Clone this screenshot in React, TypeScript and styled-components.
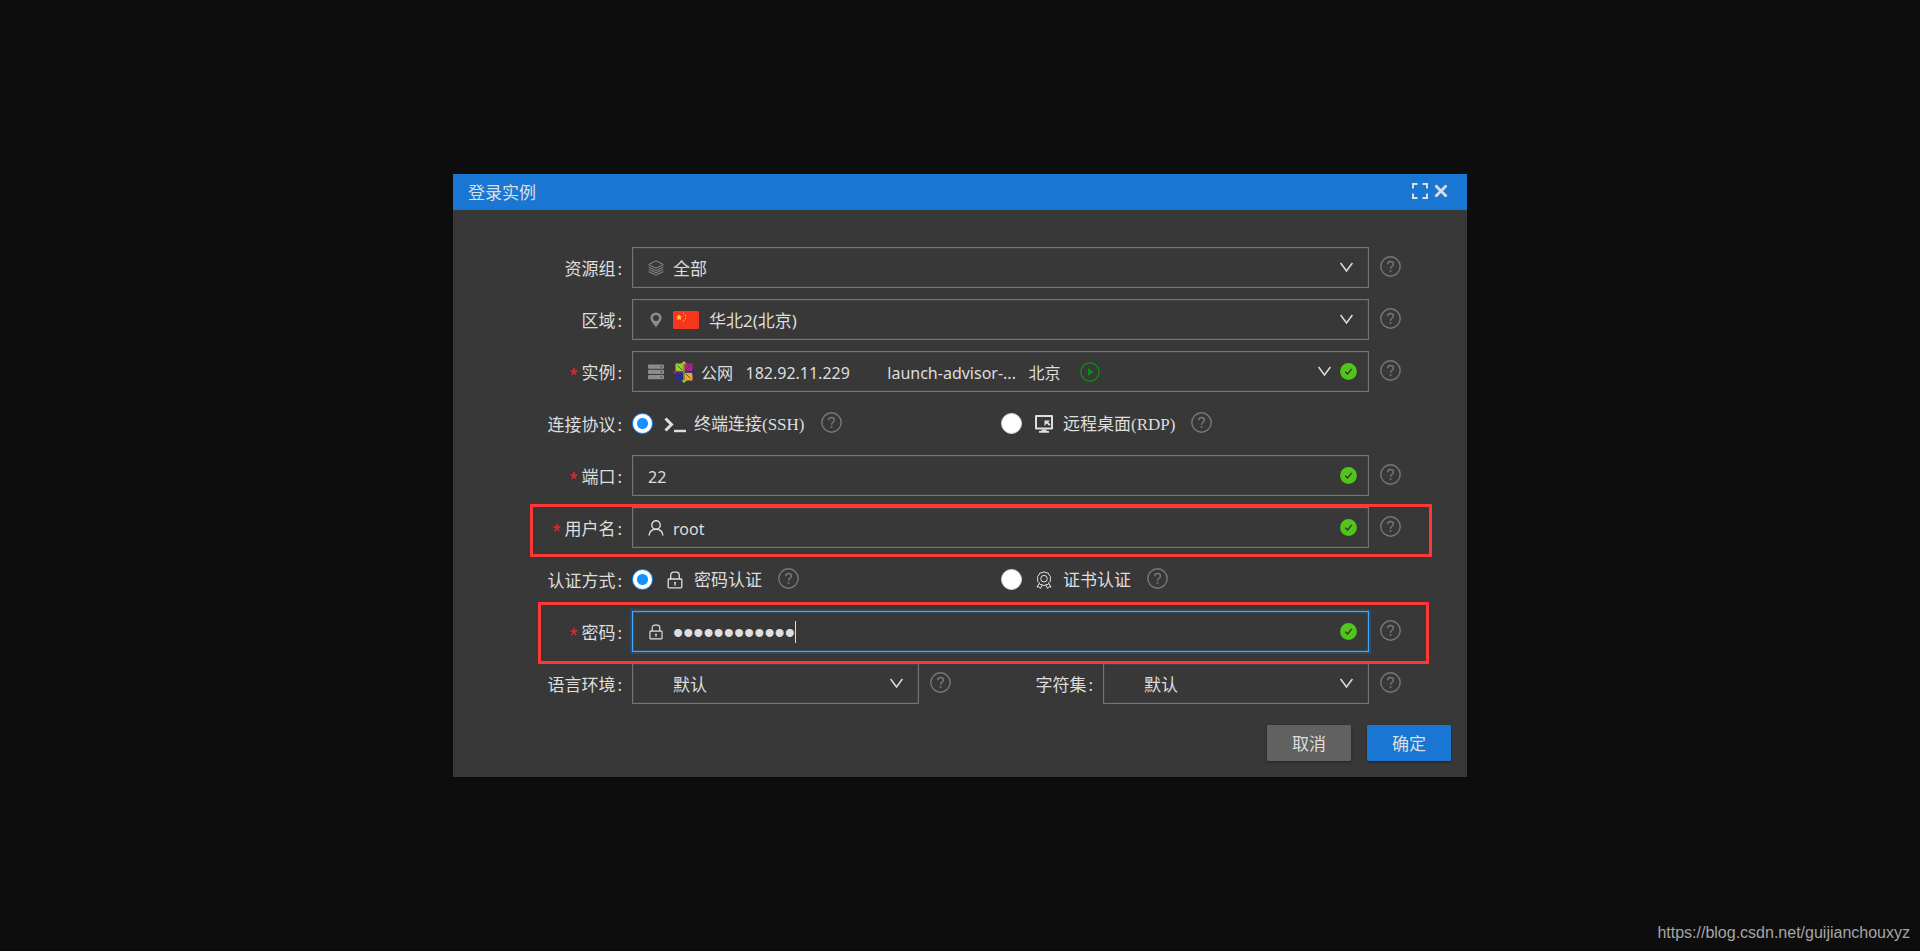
import React from 'react';
import styled, { createGlobalStyle, css } from 'styled-components';

const cjk = '"Noto Sans CJK SC"';
const ui = `"Noto Sans", ${cjk}, sans-serif`;
const mixed = `"Liberation Serif", ${cjk}, serif`;

const GlobalStyle = createGlobalStyle`
  *, *::before, *::after { box-sizing: border-box; }
  body {
    margin: 0;
    background: #0d0d0d;
    color: #dedede;
    font: 17px/24px ${ui};
  }
`;

const Page = styled.main`
  position: relative;
  min-height: 100vh;
  display: flex;
  align-items: center;
  justify-content: center;
`;

const Dialog = styled.section`
  width: 1014px;
  max-width: 100%;
  background: #383838;
`;

const TitleBar = styled.header`
  display: flex;
  align-items: center;
  height: 36px;
  padding: 0 19px 0 15px;
  background: #1976d2;
`;

const Title = styled.h1`
  flex: 1;
  margin: 0;
  padding-top: 2px;
  font-size: 17px;
  font-weight: 400;
`;

const IconButton = styled.button`
  display: flex;
  margin: 0 0 2px 6px;
  padding: 0;
  border: 0;
  background: none;
  color: #dedede;
`;

const Form = styled.form`
  display: flex;
  flex-direction: column;
  gap: 11px;
  padding-top: 37px;
`;

const Row = styled.div`
  position: relative;
  display: flex;
  align-items: center;
  height: 41px;
  padding-right: 66px;
`;

const LabelBox = styled.label<{ $grow?: boolean }>`
  display: flex;
  justify-content: flex-end;
  flex: ${(p) => (p.$grow ? '1' : '0 0 179px')};
  padding: 2px 10px 0 0;
  white-space: nowrap;
`;

const Star = styled.span`
  height: 24px;
  padding-right: 2px;
  color: #f5222d;
  font: 20px/34px "Liberation Mono", monospace;
`;

const Colon = styled.span`
  padding-left: 2px;
`;

const Field = styled.div<{ $focused?: boolean; $basis?: number; $status?: boolean }>`
  display: flex;
  align-items: center;
  flex: ${(p) => (p.$basis ? `0 1 ${p.$basis}px` : '1')};
  min-width: 0;
  height: 41px;
  padding: 0 ${(p) => (p.$status ? 11 : 15)}px 0 15px;
  border: 1px solid #757575;
  box-shadow: inset 0 0 0 1px #424242;
  ${(p) =>
    p.$focused &&
    css`
      border-color: #40a9ff;
      box-shadow: 0 0 0 2px rgba(24, 144, 255, 0.2), inset 0 0 0 1px #2f4f6b;
    `}
`;

const Slot = styled.span`
  display: flex;
  justify-content: center;
  flex: 0 0 16px;
  margin-right: 9px;
  color: #8c8c8c;
`;

const Emblem = styled.span<{ $gap: number }>`
  display: flex;
  margin-right: ${(p) => p.$gap}px;
`;

const control = css`
  min-width: 0;
  height: 39px;
  margin: 0;
  padding: 2px 0 0;
  border: 0;
  outline: 0;
  background: transparent;
  color: #dedede;
  caret-color: transparent;
`;

const Select = styled.select<{ $fit?: boolean }>`
  ${control}
  appearance: none;
  font: ${(p) => (p.$fit ? 16 : 17)}px/24px ${ui};
  ${(p) => (p.$fit ? 'field-sizing: content;' : 'flex: 1;')}
`;

const Input = styled.input`
  ${control}
  flex: 1;
  font: 16px/24px ${ui};
`;

const PasswordInput = styled.input`
  ${control}
  padding-top: 4px;
  field-sizing: content;
  font: 29px/24px "Liberation Sans", sans-serif;
`;

const Caret = styled.span`
  width: 1px;
  height: 22px;
  background: #dedede;
`;

const Spacer = styled.span`
  flex: 1;
`;

const Status = styled.span`
  display: flex;
  margin-left: 9px;
`;

const Running = styled.span`
  display: flex;
  margin-left: 20px;
`;

const HelpButton = styled.button<{ $gap?: number }>`
  display: flex;
  flex: none;
  margin: 0 0 2px ${(p) => p.$gap ?? 11}px;
  padding: 0;
  border: 0;
  background: none;
  color: #787878;
`;

const Choices = styled.div`
  display: grid;
  grid-template-columns: 369px 1fr;
  flex: 1;
`;

const Choice = styled.div`
  display: flex;
  align-items: center;
`;

const ChoiceLabel = styled.label`
  display: flex;
  align-items: center;
`;

const ChoiceText = styled.span`
  padding-top: 2px;
  font-family: ${mixed};
`;

const ChoiceIcon = styled.span`
  display: flex;
  justify-content: center;
  width: 26px;
  margin: 0 6px 0 9px;
`;

const Radio = styled.input`
  appearance: none;
  width: 21px;
  height: 21px;
  margin: 0;
  border: 1px solid #d9d9d9;
  border-radius: 50%;
  background: #fff;
  &:checked {
    border-color: #1890ff;
    background: radial-gradient(circle, #1890ff 5px, #fff 6px);
  }
`;

const Highlight = styled.div<{ $inset: string }>`
  position: absolute;
  z-index: 1;
  inset: ${(p) => p.$inset};
  border: 3px solid #ff3835;
  pointer-events: none;
`;

const Footer = styled.footer`
  display: flex;
  justify-content: flex-end;
  gap: 16px;
  padding: 10px 16px 16px;
`;

const ActionButton = styled.button<{ $primary?: boolean }>`
  width: 84px;
  height: 36px;
  padding: 2px 0 0;
  border: 0;
  border-radius: 1px;
  background: ${(p) => (p.$primary ? '#1976d2' : '#616161')};
  box-shadow: 0 1px 3px rgba(0, 0, 0, 0.4);
  color: #dedede;
  font: 17px/24px ${ui};
`;

const Watermark = styled.a`
  position: absolute;
  right: 10px;
  bottom: 6px;
  color: #a6a6a6;
  font: 16px/24px "Liberation Sans", sans-serif;
  text-decoration: none;
`;

const stroke = { fill: 'none', stroke: 'currentColor' } as const;

const Chevron = () => (
  <svg width="13" height="11" viewBox="0 0 13 11" {...stroke} strokeWidth="1.5" color="#dedede" aria-hidden="true">
    <path d="M.6 1 6.500 9 12.400 1" />
  </svg>
);

const HelpIcon = () => (
  <svg width="21" height="21" viewBox="0 0 21 21" {...stroke} strokeWidth="1.4" aria-hidden="true">
    <circle cx="10.500" cy="10.500" r="9.700" />
    <path d="M7.600 8.300c0-1.700 1.200-2.800 2.900-2.800s2.900 1 2.900 2.600c0 2.200-2.900 2.100-2.900 4.600" />
    <path d="M10.500 14.200v1.700" strokeWidth="1.700" />
  </svg>
);

const CheckIcon = () => (
  <svg width="17" height="17" viewBox="0 0 17 17" aria-hidden="true">
    <circle cx="8.500" cy="8.500" r="8.400" fill="#52c41a" />
    <path d="M5.300 8.700 7.600 11l4.100-5.200" fill="none" stroke="#333" strokeWidth="1.300" />
  </svg>
);

const LayersIcon = () => (
  <svg width="16" height="16" viewBox="0 0 16 16" {...stroke} strokeWidth="1" aria-hidden="true">
    <path d="M8 .8 15.300 4.500 8 8.200.7 4.500z" />
    <path d="M.7 7 8 10.600 15.300 7M.7 9.300 8 12.900l7.300-3.600M.7 11.600 8 15.200l7.300-3.600" />
  </svg>
);

const PinIcon = () => (
  <svg width="12" height="16" viewBox="0 0 12 16" aria-hidden="true">
    <path
      fill="currentColor"
      fillRule="evenodd"
      d="M6 .5A5.500 5.500 0 0 0 .5 6c0 3.500 3.800 6.300 5.500 9.500C7.700 12.300 11.500 9.500 11.500 6A5.500 5.500 0 0 0 6 .5zM6 3a3 3 0 1 1 0 6 3 3 0 0 1 0-6z"
    />
  </svg>
);

const ServerIcon = () => (
  <svg width="16" height="16" viewBox="0 0 16 16" aria-hidden="true">
    {[0.5, 5.75, 11].map((y) => (
      <g key={y}>
        <rect x="0" y={y} width="16" height="4.300" rx="1" fill="currentColor" />
        <circle cx="13.300" cy={y + 2.1} r=".8" fill="#383838" />
      </g>
    ))}
  </svg>
);

const FlagIcon = () => (
  <svg width="26" height="18" viewBox="0 0 26 18" aria-hidden="true">
    <rect width="26" height="18" rx="1.500" fill="#f5361d" />
    <path fill="#ffc93c" d="m6 3 .9 2.200 2.400.2-1.800 1.500.5 2.300L6 8 4 9.200l.5-2.300-1.800-1.500 2.400-.2z" />
    <g fill="#f9a02e">
      <circle cx="10.500" cy="2.500" r=".8" />
      <circle cx="12.500" cy="4.600" r=".8" />
      <circle cx="12.500" cy="7.600" r=".8" />
      <circle cx="10.500" cy="9.800" r=".8" />
    </g>
  </svg>
);

const CentosIcon = () => (
  <svg width="22" height="22" viewBox="0 0 22 22" aria-hidden="true">
    <path fill="#efa724" d="m11 0 3 3H8zM11.700 11.700h7.800v7.800h-7.800z" />
    <path fill="#9ccd2a" d="m11 22-3-3h6zM2.500 2.500h7.800v7.800H2.500z" />
    <path fill="#a3268a" d="m0 11 3-3v6zM11.700 2.500h7.800v7.800h-7.800z" />
    <path fill="#2d2c8c" d="m22 11-3-3v6zM2.500 11.700h7.800v7.800H2.500z" />
    <path fill="none" stroke="#383838" strokeWidth=".7" d="m4.500 4.500 4.800 4.800M17.500 4.500l-4.800 4.800M4.500 17.500l4.800-4.800M17.500 17.500l-4.800-4.800" />
    <path strokeWidth="1" stroke="#a3268a" d="M3 11h8" />
    <path strokeWidth="1" stroke="#2d2c8c" d="M11 11h8" />
    <path strokeWidth="1" stroke="#efa724" d="M11 3v8" />
    <path strokeWidth="1" stroke="#9ccd2a" d="M11 11v8" />
  </svg>
);

const PlayIcon = () => (
  <svg width="20" height="20" viewBox="0 0 20 20" aria-hidden="true">
    <circle cx="10" cy="10" r="9.200" fill="none" stroke="#0a9010" strokeWidth="1.300" />
    <path d="M8 6v8l5.500-4z" fill="#0a9010" />
  </svg>
);

const TerminalIcon = () => (
  <svg width="22" height="18" viewBox="0 0 22 18" {...stroke} aria-hidden="true">
    <path d="m1.500 3.500 6 6-6 6" strokeWidth="3" />
    <path d="M10 16h12" strokeWidth="2.400" />
  </svg>
);

const DesktopIcon = () => (
  <svg width="18" height="18" viewBox="0 0 18 18" {...stroke} aria-hidden="true">
    <path d="M1 1h16v12.500H1z" strokeWidth="2" strokeLinejoin="round" />
    <path d="M6.500 14.500h5V16H14v1.700H4V16h2.500z" fill="currentColor" stroke="none" />
    <path d="M9.500 5.500H15L13.300 7.200l2.200 2.200-1.400 1.400-2.200-2.200L9.500 11z" fill="currentColor" stroke="none" />
  </svg>
);

const UserIcon = () => (
  <svg width="16" height="16" viewBox="0 0 16 16" {...stroke} strokeWidth="1.400" color="#dedede" aria-hidden="true">
    <circle cx="8" cy="5" r="4.200" />
    <path d="M1 15.500c.4-3.300 2.800-6.200 7-6.200s6.600 2.900 7 6.200" />
  </svg>
);

const LockIcon = ({ size = 18 }: { size?: number }) => (
  <svg width="16" height={size} viewBox="0 0 16 18" {...stroke} strokeWidth="1.300" color="#dedede" aria-hidden="true">
    <rect x="1.200" y="8" width="13.600" height="8.800" rx=".8" />
    <path d="M3.700 8V4.500C3.700 2.300 5 1.200 6.500 1.200h3c1.500 0 2.800 1.100 2.800 3.300V8" />
    <path d="M8 11v3.400M7 11.600h2" />
  </svg>
);

const BadgeIcon = () => (
  <svg width="16" height="18" viewBox="0 0 16 18" {...stroke} strokeWidth="1" aria-hidden="true">
    <path d="m8 .8 2 .9 2.200.3.900 2 1.500 1.600-.4 2.100.4 2.200-1.500 1.500-.9 2-2.200.3-2 1-2-1-2.200-.3-.9-2-1.500-1.500.4-2.200-.4-2.100L2.900 4l.9-2L6 1.700z" />
    <circle cx="8" cy="7.700" r="3.300" />
    <path d="M3 12.500 1 16l2.200-.2 1.200 1.700L6.300 14M13 12.500l2 3.500-2.200-.2-1.200 1.700L9.700 14" />
  </svg>
);

const ExpandIcon = () => (
  <svg width="16" height="16" viewBox="0 0 16 16" {...stroke} strokeWidth="2" aria-hidden="true">
    <path d="M1 5.500V1h4.500M10.500 1H15v4.500M15 10.500V15h-4.500M5.500 15H1v-4.500" />
  </svg>
);

const CloseIcon = () => (
  <svg width="14" height="16" viewBox="0 0 14 16" {...stroke} strokeWidth="2.800" aria-hidden="true">
    <path d="m1.500 2.500 11 11M12.500 2.500l-11 11" />
  </svg>
);

const Help = ({ gap }: { gap?: number }) => (
  <HelpButton type="button" aria-label="帮助" $gap={gap}>
    <HelpIcon />
  </HelpButton>
);

type LabelProps = { text: string; htmlFor?: string; required?: boolean; grow?: boolean };

const Label = ({ text, htmlFor, required, grow }: LabelProps) => (
  <LabelBox htmlFor={htmlFor} as={htmlFor ? 'label' : 'span'} $grow={grow}>
    {required && <Star>*</Star>}
    {text}
    <Colon>:</Colon>
  </LabelBox>
);

const Valid = () => (
  <Status>
    <CheckIcon />
  </Status>
);

type RadioChoiceProps = {
  name: string;
  text: string;
  icon: React.ReactNode;
  checked?: boolean;
};

const RadioChoice = ({ name, text, icon, checked }: RadioChoiceProps) => (
  <Choice>
    <ChoiceLabel>
      <Radio type="radio" name={name} defaultChecked={checked} />
      <ChoiceIcon>{icon}</ChoiceIcon>
      <ChoiceText>{text}</ChoiceText>
    </ChoiceLabel>
    <Help gap={16} />
  </Choice>
);

const gap = (n: number) => '\u00a0'.repeat(n);
const instanceText = `公网${gap(3)}182.92.11.229${gap(9)}launch-advisor-...${gap(3)}北京`;

export default function App() {
  return (
    <>
      <GlobalStyle />
      <Page>
        <Dialog role="dialog" aria-labelledby="dialog-title">
          <TitleBar>
            <Title id="dialog-title">登录实例</Title>
            <IconButton type="button" aria-label="全屏">
              <ExpandIcon />
            </IconButton>
            <IconButton type="button" aria-label="关闭">
              <CloseIcon />
            </IconButton>
          </TitleBar>
          <Form onSubmit={(e) => e.preventDefault()}>
            <Row>
              <Label text="资源组" htmlFor="group" />
              <Field>
                <Slot><LayersIcon /></Slot>
                <Select id="group"><option>全部</option></Select>
                <Chevron />
              </Field>
              <Help />
            </Row>
            <Row>
              <Label text="区域" htmlFor="region" />
              <Field>
                <Slot><PinIcon /></Slot>
                <Emblem $gap={10}><FlagIcon /></Emblem>
                <Select id="region"><option>华北2(北京)</option></Select>
                <Chevron />
              </Field>
              <Help />
            </Row>
            <Row>
              <Label text="实例" htmlFor="instance" required />
              <Field $status>
                <Slot><ServerIcon /></Slot>
                <Emblem $gap={6}><CentosIcon /></Emblem>
                <Select id="instance" $fit><option>{instanceText}</option></Select>
                <Running><PlayIcon /></Running>
                <Spacer />
                <Chevron />
                <Valid />
              </Field>
              <Help />
            </Row>
            <Row role="radiogroup" aria-label="连接协议">
              <Label text="连接协议" />
              <Choices>
                <RadioChoice name="protocol" text="终端连接(SSH)" icon={<TerminalIcon />} checked />
                <RadioChoice name="protocol" text="远程桌面(RDP)" icon={<DesktopIcon />} />
              </Choices>
            </Row>
            <Row>
              <Label text="端口" htmlFor="port" required />
              <Field $status>
                <Input id="port" defaultValue="22" />
                <Valid />
              </Field>
              <Help />
            </Row>
            <Row>
              <Label text="用户名" htmlFor="user" required />
              <Field $status>
                <Slot><UserIcon /></Slot>
                <Input id="user" defaultValue="root" />
                <Valid />
              </Field>
              <Help />
              <Highlight $inset="-3px 35px -9px 77px" />
            </Row>
            <Row role="radiogroup" aria-label="认证方式">
              <Label text="认证方式" />
              <Choices>
                <RadioChoice name="auth" text="密码认证" icon={<LockIcon />} checked />
                <RadioChoice name="auth" text="证书认证" icon={<BadgeIcon />} />
              </Choices>
            </Row>
            <Row>
              <Label text="密码" htmlFor="password" required />
              <Field $focused $status>
                <Slot><LockIcon size={16} /></Slot>
                <PasswordInput id="password" type="password" defaultValue="############" />
                <Caret />
                <Spacer />
                <Valid />
              </Field>
              <Help />
              <Highlight $inset="-9px 38px -12px 85px" />
            </Row>
            <Row>
              <Label text="语言环境" htmlFor="locale" />
              <Field $basis={287}>
                <Slot />
                <Select id="locale"><option>默认</option></Select>
                <Chevron />
              </Field>
              <Help />
              <Label text="字符集" htmlFor="charset" grow />
              <Field $basis={266}>
                <Slot />
                <Select id="charset"><option>默认</option></Select>
                <Chevron />
              </Field>
              <Help />
            </Row>
            <Footer>
              <ActionButton type="button">取消</ActionButton>
              <ActionButton type="submit" $primary>确定</ActionButton>
            </Footer>
          </Form>
        </Dialog>
        <Watermark href="https://blog.csdn.net/guijianchouxyz">https://blog.csdn.net/guijianchouxyz</Watermark>
      </Page>
    </>
  );
}
